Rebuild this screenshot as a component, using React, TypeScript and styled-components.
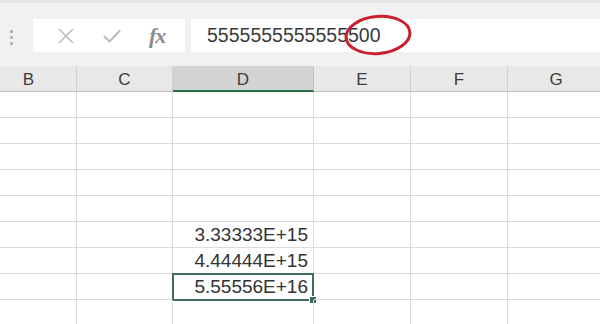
import React from 'react';
import styled, { createGlobalStyle } from 'styled-components';

// B starts off-screen on the left, G runs past the right edge
const columns = [
  { name: 'B', width: 96 },
  { name: 'C', width: 96 },
  { name: 'D', width: 141, selected: true },
  { name: 'E', width: 97 },
  { name: 'F', width: 97 },
  { name: 'G', width: 97 },
];

const rows: Record<number, string> = {
  5: '3.33333E+15',
  6: '4.44444E+15',
  7: '5.55556E+16',
};

const App: React.FC = () => {
  const template = columns.map((c) => `${c.width}px`).join(' ');

  return (
    <>
      <GlobalStyle />
      <Page>
        <Toolbar>
          <Grip>
            <Dot />
            <Dot />
            <Dot />
          </Grip>
          <ActionBox>
            <IconSlot>
              <svg width="18" height="18" viewBox="0 0 18 18">
                <path d="M2 2 L16 16 M16 2 L2 16" stroke="#bdbdbd" strokeWidth="1.7" fill="none" />
              </svg>
            </IconSlot>
            <IconSlot>
              <svg width="20" height="16" viewBox="0 0 20 16">
                <path d="M2 8 L7.5 13.5 L18 2.5" stroke="#bdbdbd" strokeWidth="2.2" fill="none" />
              </svg>
            </IconSlot>
            <Fx>fx</Fx>
          </ActionBox>
          <FormulaBox>
            <FormulaText>5555555555555500</FormulaText>
            <Circle width="74" height="44" viewBox="0 0 74 44">
              <ellipse
                cx="36"
                cy="21"
                rx="32"
                ry="18.5"
                transform="rotate(-5 36 21)"
                stroke="#c9202b"
                strokeWidth="3"
                fill="none"
              />
            </Circle>
          </FormulaBox>
        </Toolbar>

        <Sheet $template={template}>
          {columns.map((c) => (
            <HeaderCell key={c.name} $selected={c.selected}>
              {c.name}
            </HeaderCell>
          ))}
          {Array.from({ length: 9 }).map((_, r) =>
            columns.map((c) => (
              <Cell key={`${r}-${c.name}`}>
                {c.name === 'D' && rows[r] && <CellText>{rows[r]}</CellText>}
                {c.name === 'D' && r === 7 && (
                  <Selection>
                    <Handle />
                  </Selection>
                )}
              </Cell>
            ))
          )}
        </Sheet>
      </Page>
    </>
  );
};

const GlobalStyle = createGlobalStyle`
  body {
    margin: 0;
    background: #ffffff;
    font-family: 'Liberation Sans', Arial, sans-serif;
  }
`;

const Page = styled.div`
  width: 600px;
  height: 324px;
  overflow: hidden;
  background: #ffffff;
`;

const Toolbar = styled.div`
  height: 66px;
  box-sizing: border-box;
  display: flex;
  align-items: flex-start;
  padding-top: 18px;
  background: #f1f1f1;
  border-top: 3px solid #e4e4e4;
`;

const Grip = styled.div`
  width: 33px;
  height: 33px;
  display: flex;
  flex-direction: column;
  align-items: center;
  justify-content: center;
  gap: 3px;
  padding-right: 10px;
  box-sizing: border-box;
`;

const Dot = styled.span`
  width: 3px;
  height: 3px;
  border-radius: 50%;
  background: #a8a8a8;
`;

const ActionBox = styled.div`
  width: 152px;
  height: 33px;
  margin-top: -2px;
  background: #ffffff;
  display: flex;
  align-items: center;
  justify-content: space-around;
  padding: 0 6px 0 10px;
  box-sizing: border-box;
`;

const IconSlot = styled.div`
  display: flex;
  align-items: center;
  justify-content: center;
`;

const Fx = styled.span`
  font-family: 'Liberation Serif', 'Times New Roman', serif;
  font-style: italic;
  font-weight: bold;
  font-size: 22px;
  color: #8a8a8a;
  letter-spacing: -1px;
`;

const FormulaBox = styled.div`
  position: relative;
  flex: 1;
  height: 33px;
  margin-top: -2px;
  margin-left: 6px;
  background: #ffffff;
  display: flex;
  align-items: center;
  padding-left: 16px;
`;

const FormulaText = styled.span`
  font-size: 19.5px;
  color: #3a3a3a;
`;

const Circle = styled.svg`
  position: absolute;
  left: 151px;
  top: -5px;
`;

const Sheet = styled.div<{ $template: string }>`
  display: grid;
  grid-template-columns: ${({ $template }) => $template};
  grid-auto-rows: 26px;
  margin-left: -19px;
`;

const HeaderCell = styled.div<{ $selected?: boolean }>`
  box-sizing: border-box;
  display: flex;
  align-items: center;
  justify-content: center;
  padding-top: 3px;
  font-size: 17px;
  color: #3c3c3c;
  background: ${({ $selected }) => ($selected ? '#d3d3d3' : '#e8e8e8')};
  border-right: 1px solid ${({ $selected }) => ($selected ? '#c4c4c4' : '#cfcfcf')};
  border-bottom: ${({ $selected }) => ($selected ? '2px solid #227447' : '1px solid #bdbdbd')};
`;

const Cell = styled.div`
  position: relative;
  box-sizing: border-box;
  border-right: 1px solid #dadada;
  border-bottom: 1px solid #dadada;
  display: flex;
  align-items: flex-end;
  justify-content: flex-end;
  padding: 0 5px 1px 0;
`;

const CellText = styled.span`
  font-size: 19px;
  line-height: 22px;
  color: #333333;
`;

const Selection = styled.div`
  position: absolute;
  left: -1px;
  top: -1px;
  right: -1px;
  bottom: -2px;
  border: 2px solid #3f6e58;
  pointer-events: none;
`;

const Handle = styled.div`
  position: absolute;
  right: -5px;
  bottom: -5px;
  width: 6px;
  height: 6px;
  background: #3f6e58;
  border: 1px solid #ffffff;
`;

export default App;
